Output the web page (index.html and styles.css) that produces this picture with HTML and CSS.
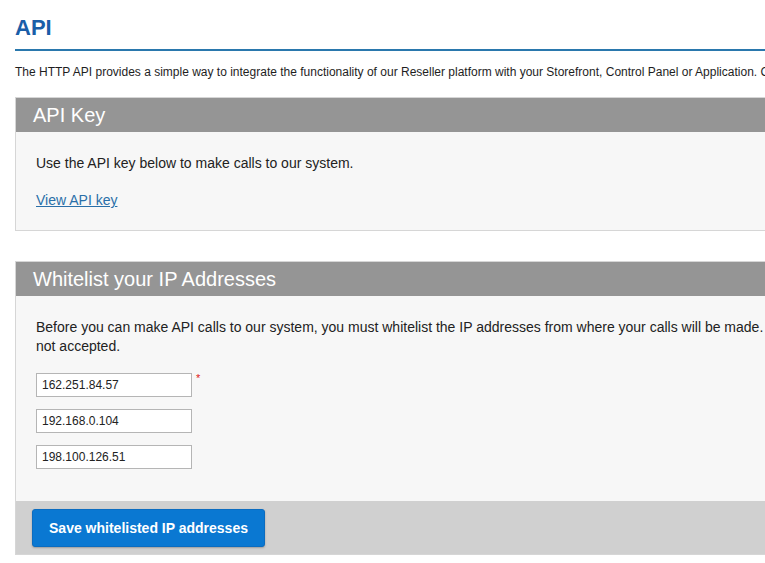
FILE: index.html
```html
<!DOCTYPE html>
<html lang="en">
<head>
<meta charset="utf-8">
<title>API</title>
<link rel="stylesheet" href="styles.css">
</head>
<body>
<div class="page">
  <h1 class="title">API</h1>
  <p class="intro">The HTTP API provides a simple way to integrate the functionality of our Reseller platform with your Storefront, Control Panel or Application. Calls are made over HTTPS.</p>

  <section class="panel">
    <h2 class="panel-head">API Key</h2>
    <div class="panel-body">
      <p class="text">Use the API key below to make calls to our system.</p>
      <a class="link" href="#">View API key</a>
    </div>
  </section>

  <section class="panel">
    <h2 class="panel-head">Whitelist your IP Addresses</h2>
    <div class="panel-body">
      <p class="text">Before you can make API calls to our system, you must whitelist the IP addresses from where your calls will be made. Calls from other IP addresses are <span class="nowrap">not accepted.</span></p>
      <div class="fields">
        <div class="field"><input class="ip" type="text" value="162.251.84.57"><span class="req">*</span></div>
        <div class="field"><input class="ip" type="text" value="192.168.0.104"></div>
        <div class="field"><input class="ip" type="text" value="198.100.126.51"></div>
      </div>
    </div>
    <div class="panel-foot">
      <button class="btn" type="button">Save whitelisted IP addresses</button>
    </div>
  </section>
</div>
</body>
</html>
```
FILE: styles.css
```css
html, body {
  margin: 0;
  padding: 0;
  background: #fff;
  overflow: hidden;
}
body {
  font-family: "Liberation Sans", Arial, sans-serif;
  color: #222;
}
.page {
  width: 1000px;
  margin-left: 15px;
}
.title {
  margin: 0;
  padding-top: 15px;
  font-size: 22px;
  line-height: 26px;
  font-weight: bold;
  color: #1a5ea8;
  padding-bottom: 8px;
  border-bottom: 2px solid #2a78ad;
}
.intro {
  margin: 13px 0 0;
  font-size: 12px;
  line-height: 16px;
  color: #1e1e1e;
  white-space: nowrap;
}
.panel {
  margin-top: 17px;
  border: 1px solid #d6d6d6;
  background: #f7f7f7;
}
.panel + .panel {
  margin-top: 30px;
}
.panel-head {
  margin: 0;
  background: #959595;
  color: #fff;
  font-weight: normal;
  font-size: 20px;
  line-height: 34px;
  height: 34px;
  padding-left: 17px;
}
.panel-body {
  padding: 22px 20px 18px 20px;
}
.text {
  margin: 0;
  font-size: 14px;
  line-height: 19px;
  color: #222;
}
.link {
  display: inline-block;
  margin-top: 18px;
  margin-bottom: 2px;
  font-size: 14px;
  line-height: 19px;
  color: #2a6fa8;
  text-decoration: underline;
}
.nowrap {
  white-space: nowrap;
}
.fields {
  display: flex;
  flex-direction: column;
  gap: 12px;
  margin-top: 17px;
  margin-bottom: 14px;
}
.field {
  display: flex;
  align-items: flex-start;
}
.ip {
  box-sizing: border-box;
  width: 156px;
  height: 24px;
  margin: 0;
  padding: 0 5px;
  border: 1px solid #b5b5b5;
  border-radius: 0;
  background: #fff;
  font-family: "Liberation Sans", Arial, sans-serif;
  font-size: 12px;
  color: #222;
}
.req {
  margin-left: 4px;
  color: #e02020;
  font-size: 11px;
  line-height: 11px;
}
.panel-foot {
  background: #d0d0d0;
  padding: 8px 16px 7px;
}
.btn {
  box-sizing: border-box;
  height: 38px;
  width: 233px;
  padding: 0 16px;
  background: #0a78d2;
  border: 1px solid #0b6cc0;
  border-radius: 3px;
  box-shadow: 0 1px 2px rgba(0,0,0,0.25);
  color: #fff;
  font-family: "Liberation Sans", Arial, sans-serif;
  font-size: 14px;
  font-weight: bold;
}
```
